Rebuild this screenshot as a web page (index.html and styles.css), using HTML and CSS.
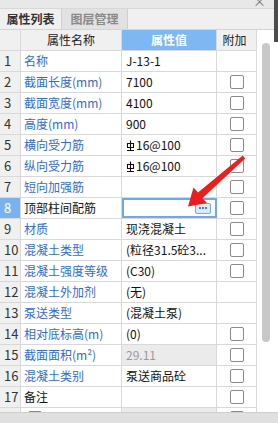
FILE: index.html
```html
<!DOCTYPE html>
<html lang="zh">
<head>
    <meta charset="UTF-8">
    <title>属性列表</title>
    <link rel="stylesheet" href="styles.css">
</head>
<body>
    <div class="window">
        <div class="top">
            <div class="pane">
                <div class="titlebar"><span class="close">×</span></div>
                <div class="tabs">
                    <div class="tab active">属性列表</div>
                    <div class="tab">图层管理</div>
                </div>
                <div class="grid-area">
                    <div class="grid">
                        <div class="row head">
                            <div class="cell num"></div>
                            <div class="cell name">属性名称</div>
                            <div class="cell val">属性值</div>
                            <div class="cell extra">附加</div>
                        </div>
                        <div class="row"><div class="cell num">1</div><div class="cell name">名称</div><div class="cell val">J-13-1</div><div class="cell extra"></div></div>
                        <div class="row"><div class="cell num">2</div><div class="cell name">截面长度(mm)</div><div class="cell val">7100</div><div class="cell extra"><span class="box"></span></div></div>
                        <div class="row"><div class="cell num">3</div><div class="cell name">截面宽度(mm)</div><div class="cell val">4100</div><div class="cell extra"><span class="box"></span></div></div>
                        <div class="row"><div class="cell num">4</div><div class="cell name">高度(mm)</div><div class="cell val">900</div><div class="cell extra"><span class="box"></span></div></div>
                        <div class="row"><div class="cell num">5</div><div class="cell name">横向受力筋</div><div class="cell val"><svg class="bar" width="9" height="11" viewBox="0 0 9 11"><path d="M4.5 0.5V10.5M1.5 3.5h6v4h-6zM1 10.5h7" fill="none" stroke="#111" stroke-width="1.1"/></svg>16@100</div><div class="cell extra"><span class="box"></span></div></div>
                        <div class="row"><div class="cell num">6</div><div class="cell name">纵向受力筋</div><div class="cell val"><svg class="bar" width="9" height="11" viewBox="0 0 9 11"><path d="M4.5 0.5V10.5M1.5 3.5h6v4h-6zM1 10.5h7" fill="none" stroke="#111" stroke-width="1.1"/></svg>16@100</div><div class="cell extra"><span class="box"></span></div></div>
                        <div class="row"><div class="cell num">7</div><div class="cell name">短向加强筋</div><div class="cell val"></div><div class="cell extra"><span class="box"></span></div></div>
                        <div class="row current"><div class="cell num">8</div><div class="cell name">顶部柱间配筋</div><div class="cell val edit"><span class="more"><i></i><i></i><i></i></span></div><div class="cell extra"><span class="box"></span></div></div>
                        <div class="row"><div class="cell num">9</div><div class="cell name">材质</div><div class="cell val">现浇混凝土</div><div class="cell extra"><span class="box"></span></div></div>
                        <div class="row"><div class="cell num">10</div><div class="cell name">混凝土类型</div><div class="cell val">(粒径31.5砼3...</div><div class="cell extra"><span class="box"></span></div></div>
                        <div class="row"><div class="cell num">11</div><div class="cell name">混凝土强度等级</div><div class="cell val">(C30)</div><div class="cell extra"><span class="box"></span></div></div>
                        <div class="row"><div class="cell num">12</div><div class="cell name">混凝土外加剂</div><div class="cell val">(无)</div><div class="cell extra"></div></div>
                        <div class="row"><div class="cell num">13</div><div class="cell name">泵送类型</div><div class="cell val">(混凝土泵)</div><div class="cell extra"></div></div>
                        <div class="row"><div class="cell num">14</div><div class="cell name">相对底标高(m)</div><div class="cell val">(0)</div><div class="cell extra"><span class="box"></span></div></div>
                        <div class="row"><div class="cell num">15</div><div class="cell name">截面面积(m²)</div><div class="cell val locked">29.11</div><div class="cell extra"><span class="box"></span></div></div>
                        <div class="row"><div class="cell num">16</div><div class="cell name">混凝土类别</div><div class="cell val">泵送商品砼</div><div class="cell extra"><span class="box"></span></div></div>
                        <div class="row"><div class="cell num">17</div><div class="cell name plain">备注</div><div class="cell val"></div><div class="cell extra"><span class="box"></span></div></div>
                        <div class="row"><div class="cell num"></div><div class="cell name"><span class="box"></span></div><div class="cell val locked"></div><div class="cell extra"><span class="box"></span></div></div>
                    </div>
                    <div class="scroll"><div class="thumb"></div></div>
                </div>
            </div>
            <div class="edge"><div class="edge-dark"></div></div>
        </div>
        <div class="status"></div>

        <svg class="arrow" width="278" height="423" viewBox="0 0 278 423">
            <polygon points="245.2,158.4 202.4,198.2 207,203 188,206.5 193.5,187.5 198,192.6 242.8,155.6" fill="#ee1c1c"/>
        </svg>
    </div>
</body>
</html>
```

FILE: styles.css
```css
/* Property panel */
body {
    margin: 0;
    padding: 0;
    font-family: 'Noto Sans CJK SC', 'Noto Sans', sans-serif;
    font-size: 12px;
    color: #111;
    background-color: #fff;
}

.window {
    position: relative;
    width: 278px;
    height: 423px;
    display: flex;
    flex-direction: column;
    overflow: hidden;
}

.top {
    flex: 1;
    display: flex;
    min-height: 0;
}

.pane {
    width: 274px;
    display: flex;
    flex-direction: column;
    background-color: #f0f0f0;
}

.titlebar {
    height: 8px;
    background-color: #e8e8e8;
    border-bottom: 1px solid #d8d8d8;
    display: flex;
    justify-content: flex-end;
    overflow: hidden;
}

.close {
    margin-right: 8px;
    margin-top: -6px;
    font-size: 13px;
    line-height: 14px;
    color: #777;
}

.tabs {
    height: 20px;
    display: flex;
}

.tab {
    width: 61px;
    line-height: 20px;
    text-align: center;
    font-weight: bold;
    border-right: 1px solid #d0d0d0;
    color: #333;
}

.tab + .tab {
    width: 65px;
    background-color: #e2e2e2;
    color: #8a8a8a;
    border-right: 1px solid #cfcfcf;
}

.grid-area {
    flex: 1;
    display: flex;
    min-height: 0;
    overflow: hidden;
    border-top: 1px solid #d4d4d4;
}

.grid {
    width: 257px;
    flex-shrink: 0;
}

.row {
    display: grid;
    grid-template-columns: 21px 101px 95px 40px;
    height: 21px;
    box-sizing: border-box;
    border-bottom: 1px solid #d9d9d9;
}

.cell {
    box-sizing: border-box;
    border-right: 1px solid #d9d9d9;
    line-height: 20px;
    white-space: nowrap;
    overflow: hidden;
    background-color: #fff;
}

.num {
    background-color: #f0f0f0;
    padding-left: 4px;
    font-size: 13px;
    color: #333;
}

.name {
    padding-left: 3px;
    color: #2f6bd8;
}

.name.plain {
    color: #111;
}

.val {
    padding-left: 4px;
    display: flex;
    align-items: center;
}

.extra {
    display: flex;
    align-items: center;
    justify-content: center;
    padding-left: 1px;
}

.head .cell {
    background-color: #f0f0f0;
    text-align: center;
    color: #222;
    padding: 0;
}

.head .val {
    background-color: #7db8f4;
    color: #fff;
    justify-content: center;
    font-weight: bold;
}

.head .extra {
    padding-right: 4px;
}

.current .num {
    background-color: #78b3ef;
    color: #fff;
}

.current .name {
    color: #111;
}

.val.edit {
    border: 2px solid #6ea9ea;
    justify-content: flex-end;
    padding-right: 4px;
}

.more {
    width: 14px;
    height: 9px;
    border: 1px solid #6ea9ea;
    border-radius: 2px;
    background-color: #dce9fa;
    display: flex;
    align-items: center;
    justify-content: center;
    gap: 1px;
}

.more i {
    width: 2px;
    height: 2px;
    background-color: #3f7fd4;
}

.val.locked {
    background-color: #ebebeb;
    color: #9a9a9a;
}

.bar {
    margin-right: 1px;
}

.box {
    width: 12px;
    height: 12px;
    border: 1px solid #8a8a8a;
    border-radius: 2px;
    background-color: #fff;
}

.name .box {
    display: inline-block;
    margin-left: 4px;
    margin-top: 3px;
}

.scroll {
    flex: 1;
    background-color: #fff;
    padding: 13px 4px 0 5px;
}

.thumb {
    width: 8px;
    height: 299px;
    border-radius: 4px;
    background-color: #c8c8c8;
}

.edge {
    width: 4px;
    background-color: #fff;
}

.edge-dark {
    height: 42px;
    background-color: #4c4c4c;
}

.status {
    height: 10px;
    background-color: #e0e0e0;
    border-top: 1px solid #cfcfcf;
}

.arrow {
    position: absolute;
    left: 0;
    top: 0;
    pointer-events: none;
}
```
